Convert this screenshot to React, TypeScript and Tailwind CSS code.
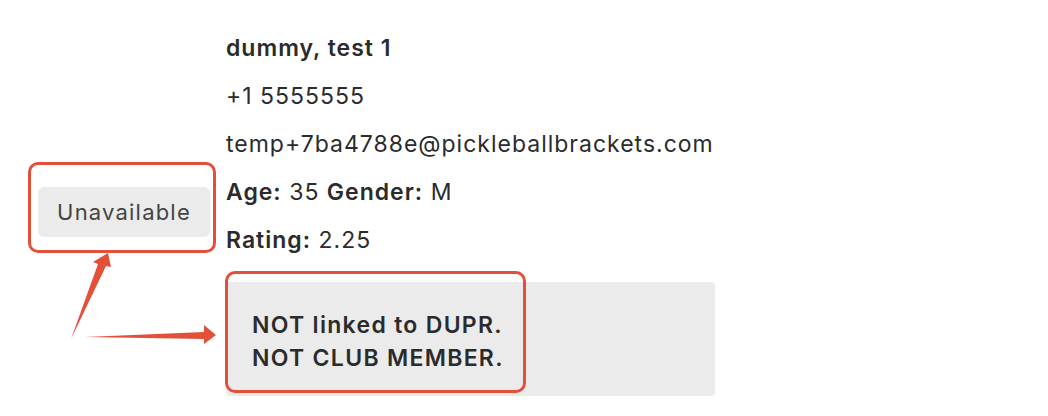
import React from "react"

const font = { fontFamily: "Inter, 'Noto Sans', sans-serif" }

function Annotations() {
  return (
    <>
      {/* red callout boxes */}
      <div className="absolute left-[28px] top-[162px] w-[188px] h-[91px] rounded-[10px] border-[3px] border-[#e2503a] pointer-events-none" />
      <div className="absolute left-[225px] top-[271px] w-[301px] h-[122px] rounded-[10px] border-[3px] border-[#e2503a] pointer-events-none" />
      {/* arrows */}
      <svg className="absolute left-0 top-0 pointer-events-none" width="1048" height="416" viewBox="0 0 1048 416">
        <polygon points="71,339 98,264 93,262 108,253 111,267 106,266" fill="#e2503a" />
        <polygon points="85,337 204,332 204,325 216,335 204,344 204,339" fill="#e2503a" />
      </svg>
    </>
  )
}

export default function App() {
  return (
    <div className="relative w-[1048px] h-[416px] bg-white overflow-hidden text-[#2b2b2b]" style={font}>
      <div className="flex pt-[24px]">
        <div className="w-[226px] pl-[38px] pt-[4px] flex items-center">
          <button className="w-[172px] h-[50px] rounded-[6px] bg-[#ebebeb] text-[22px] tracking-[1.2px] text-[#444]">
            Unavailable
          </button>
        </div>
        <div className="flex flex-col">
          <div className="text-[23px] leading-[48px] tracking-[1px]">
            <p className="font-semibold">dummy, test 1</p>
            <p>+1 5555555</p>
            <p>temp+7ba4788e@pickleballbrackets.com</p>
            <p>
              <span className="font-semibold">Age:</span> 35{" "}
              <span className="font-semibold">Gender:</span> M
            </p>
            <p>
              <span className="font-semibold">Rating:</span> 2.25
            </p>
          </div>
          <div className="mt-[18px] w-[489px] h-[114px] rounded-[4px] bg-[#ebebeb] px-[26px] pt-[27px] pb-[21px] text-[23px] leading-[33px] tracking-[1.3px] font-semibold">
            <p>NOT linked to DUPR.</p>
            <p>NOT CLUB MEMBER.</p>
          </div>
        </div>
      </div>
      <Annotations />
    </div>
  )
}
